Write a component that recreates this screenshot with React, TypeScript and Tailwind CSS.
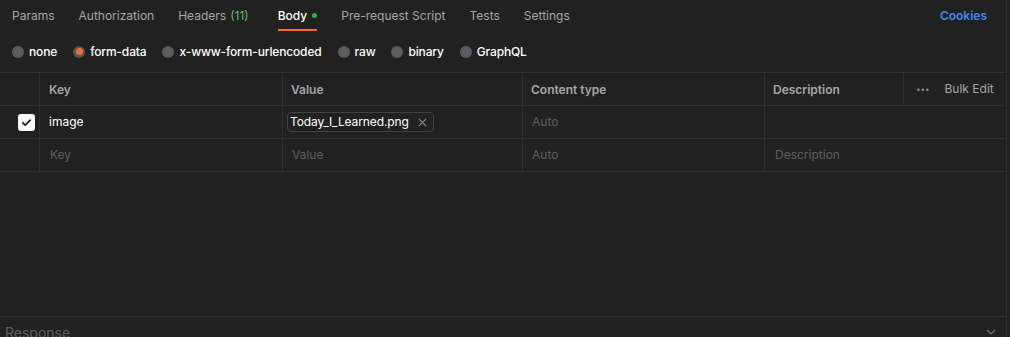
import React from 'react';

const tabs = [
  { label: 'Params' },
  { label: 'Authorization' },
  { label: 'Headers', count: '(11)' },
  { label: 'Body', active: true },
  { label: 'Pre-request Script' },
  { label: 'Tests' },
  { label: 'Settings' },
];

const bodyTypes = ['none', 'form-data', 'x-www-form-urlencoded', 'raw', 'binary', 'GraphQL'];

const App: React.FC = () => {
  return (
    <div
      className="w-[1010px] h-[337px] bg-[#212121] text-[12px] overflow-hidden flex"
      style={{ fontFamily: 'Inter, "Noto Sans", sans-serif' }}
    >
      <div className="w-[1007px] border-r border-[#2e2e2e] flex flex-col">
        {/* tabs */}
        <div className="h-[33px] flex items-stretch pl-3 pr-[19px]">
          {tabs.map((t) => (
            <div key={t.label} className="relative flex items-center mr-6 pb-[2px]">
              <span className={t.active ? 'text-white font-medium' : 'text-[#a6a6a6]'}>{t.label}</span>
              {t.count && <span className="ml-1 mr-[5px] text-[#5fbf6a]">{t.count}</span>}
              {t.active && <span className="ml-[5px] w-[5px] h-[5px] rounded-full bg-[#28b04a]" />}
              {t.active && <span className="absolute left-0 right-0 bottom-[2px] h-[2px] bg-[#f26b3a]" />}
            </div>
          ))}
          <div className="ml-auto flex items-center pb-[2px] text-[#3d8bf0] font-semibold">Cookies</div>
        </div>

        {/* body type radios */}
        <div className="h-[39px] flex items-center pl-3 pb-[2px] gap-4">
          {bodyTypes.map((b) => (
            <div key={b} className="flex items-center gap-[5px] text-white font-medium tracking-[-0.15px]">
              {b === 'form-data' ? (
                <span className="w-[12px] h-[12px] rounded-full bg-[#555] flex items-center justify-center">
                  <span className="w-[7px] h-[7px] rounded-full bg-[#f26b3a]" />
                </span>
              ) : (
                <span className="w-[12px] h-[12px] rounded-full bg-[#5c5c5c]" />
              )}
              <span>{b}</span>
            </div>
          ))}
        </div>

        {/* table */}
        <div className="border-t border-[#303030]">
          <div className="h-[33px] flex border-b border-[#303030] text-[#a6a6a6] font-semibold">
            <div className="w-[40px] border-r border-[#303030]" />
            <div className="w-[243px] border-r border-[#303030] flex items-center pl-[9px] pt-[2px]">Key</div>
            <div className="w-[240px] border-r border-[#303030] flex items-center pl-[8px] pt-[2px]">Value</div>
            <div className="w-[242px] border-r border-[#303030] flex items-center pl-[8px] pt-[2px]">Content type</div>
            <div className="w-[139px] border-r border-[#303030] flex items-center pl-[8px] pt-[2px]">Description</div>
            <div className="flex-1 flex items-center pl-3 gap-[15px] font-normal">
              <span className="text-[#8a8a8a] text-[8px] -mt-[1px]">•••</span>
              <span className="text-[#a6a6a6] -mt-[1px]">Bulk Edit</span>
            </div>
          </div>

          <div className="h-[33px] flex border-b border-[#303030]">
            <div className="w-[40px] border-r border-[#303030] flex items-center pl-[18px]">
              <span className="w-[17px] h-[17px] rounded-[3px] bg-white flex items-center justify-center">
                <svg width="11" height="11" viewBox="0 0 12 12" fill="none">
                  <path d="M2 6.3l2.6 2.6L10 3.4" stroke="#212121" strokeWidth="2" strokeLinecap="round" strokeLinejoin="round" />
                </svg>
              </span>
            </div>
            <div className="w-[243px] border-r border-[#303030] flex items-center pl-[9px] text-white">image</div>
            <div className="w-[240px] border-r border-[#303030] flex items-center pl-[4px]">
              <span className="h-[20px] flex items-center gap-[9px] pl-[2px] pr-[6px] border border-[#424242] rounded-[4px] text-white tracking-[-0.1px]">
                Today_I_Learned.png
                <svg width="9" height="9" viewBox="0 0 10 10" fill="none">
                  <path d="M1 1l8 8M9 1l-8 8" stroke="#8f8f8f" strokeWidth="1.2" />
                </svg>
              </span>
            </div>
            <div className="w-[242px] border-r border-[#303030] flex items-center pl-[9px] text-[#5f5f5f]">Auto</div>
            <div className="flex-1" />
          </div>

          <div className="h-[33px] flex border-b border-[#303030] text-[#5f5f5f]">
            <div className="w-[40px] border-r border-[#303030]" />
            <div className="w-[243px] border-r border-[#303030] flex items-center pl-[10px]">Key</div>
            <div className="w-[240px] border-r border-[#303030] flex items-center pl-[9px]">Value</div>
            <div className="w-[242px] border-r border-[#303030] flex items-center pl-[9px]">Auto</div>
            <div className="flex-1 flex items-center pl-[10px]">Description</div>
          </div>
        </div>

        <div className="flex-1" />

        {/* response bar */}
        <div className="h-[21px] border-t border-[#333] flex items-end justify-between pl-[5px] pr-[10px]">
          <span className="text-[#5f5f5f] text-[14px] leading-none -mb-[3px]">Response</span>
          <svg width="10" height="6" viewBox="0 0 10 6" fill="none" className="mb-[2px]">
            <path d="M1 1l4 4 4-4" stroke="#777" strokeWidth="1.2" />
          </svg>
        </div>
      </div>
    </div>
  );
};

export default App;
